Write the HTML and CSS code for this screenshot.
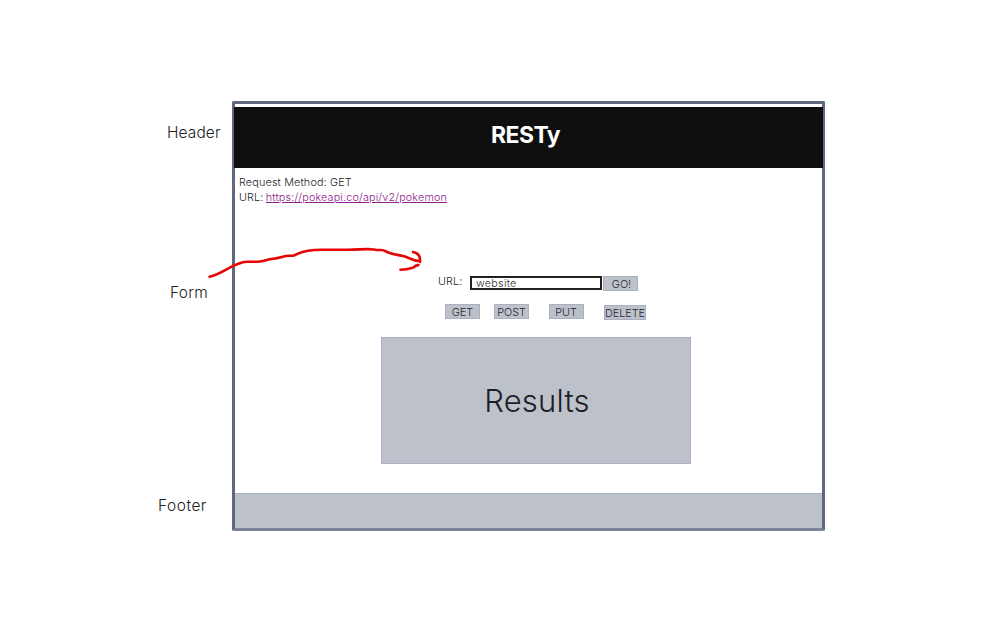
FILE: index.html
```html
<!DOCTYPE html>
<html lang="en">
<head>
<meta charset="utf-8">
<title>RESTy</title>
<link rel="stylesheet" href="styles.css">
</head>
<body>
<div class="board">
  <aside class="labels">
    <span class="label label-header">Header</span>
    <span class="label label-form">Form</span>
    <span class="label label-footer">Footer</span>
  </aside>
  <div class="frame">
    <header class="header"><h1>RESTy</h1></header>
    <main class="main">
      <div class="request">
        <div class="method">Request Method: GET</div>
        <div class="address">URL: <a href="#">https://pokeapi.co/api/v2/pokemon</a></div>
      </div>
      <form class="form">
        <div class="url-row">
          <label for="url">URL:</label>
          <input id="url" type="text" value="website">
          <button type="button" class="go">GO!</button>
        </div>
        <div class="methods">
          <button type="button" class="get">GET</button>
          <button type="button">POST</button>
          <button type="button" class="put">PUT</button>
          <button type="button" class="delete">DELETE</button>
        </div>
      </form>
      <section class="results"><span>Results</span></section>
    </main>
    <footer class="footer"></footer>
  </div>
  <svg class="arrow" viewBox="200 235 240 50" width="240" height="50" fill="none" stroke="#e60505" stroke-width="2.6" stroke-linecap="round" stroke-linejoin="round">
    <path d="M209.500 276.800C219 275 228 268 234 265.500C239 264 241 261.700 247 261.700H258C265 261.500 266 259.500 273 258.700C281 257.700 284 255.700 289 255.700C294 255.700 294 255.800 298 253.700C304 250.700 312 249.700 322 249.700H348C360 249.500 369 248.500 374 249.500C380 251 382 248.700 386 251.400C390 254 397 254.700 403 256C409 257.300 412 261 419.500 261"/>
    <path d="M413 252C419 253 420.500 257 420 262"/>
    <path d="M400.500 269.800C407 269.500 410 268.500 413.500 267.500C415 265.500 416 265.500 418.500 265"/>
  </svg>
</div>
</body>
</html>
```
FILE: styles.css
```css
* { box-sizing: border-box; }
body {
  margin: 0;
  background: #fff;
  color: #222;
  font-family: Inter, "Liberation Sans", sans-serif;
  font-weight: 300;
  overflow: hidden;
}
.board {
  position: relative;
  display: grid;
  grid-template-columns: 232px 593px;
  height: 633px;
  padding-top: 101px;
}
.labels {
  display: flex;
  flex-direction: column;
  align-items: flex-start;
  font-size: 15.5px;
  line-height: 20px;
}
.label-header { margin: 22px 0 0 167px; letter-spacing: 0.1px; }
.label-form { margin: 140px 0 0 170px; letter-spacing: 0.3px; }
.label-footer { margin: 193px 0 0 158px; letter-spacing: 0.5px; }
.frame {
  display: flex;
  flex-direction: column;
  height: 430px;
  padding-top: 3px;
  border: 3px solid #606882;
  border-bottom-color: #7b839b;
  border-radius: 2px;
}
.header {
  display: flex;
  justify-content: center;
  height: 61px;
  flex: none;
  margin: 0 -1px;
  background: #0f0f0f;
  color: #fff;
}
.header h1 {
  margin: 14px 6px 0 0;
  font-size: 23px;
  line-height: 28px;
  font-weight: 700;
  letter-spacing: -0.6px;
}
.main { flex: 1; }
.request {
  height: 108px;
  padding: 7px 0 0 4px;
  font-size: 10.8px;
  line-height: 15px;
  letter-spacing: 0.16px;
}
.address { word-spacing: -1px; }
.request a { color: #8d208d; }
.form { font-size: 10.8px; }
.url-row { display: flex; padding-left: 203px; height: 28px; }
.url-row label { width: 32px; line-height: 12px; letter-spacing: 0.1px; }
input {
  width: 132px;
  height: 14px;
  padding: 0 4px;
  border: 2px solid #202020;
  color: #333;
  font: 300 10.8px/10px Inter, "Liberation Sans", sans-serif;
  letter-spacing: 0.25px;
}
button {
  width: 35px;
  height: 15px;
  padding: 1px 0 0;
  border: 1px solid #a9b0c2;
  background: #bdc1ca;
  color: #252830;
  font: 300 10.8px/13px Inter, "Liberation Sans", sans-serif;
  white-space: nowrap;
}
.go { margin-left: 1px; padding-left: 2px; }
.methods { display: flex; padding-left: 210px; height: 33px; }
.methods button + button { margin-left: 14px; }
.methods .put { padding-right: 1px; }
.methods button + .put { margin-left: 20px; }
.methods .delete { width: 42px; margin-top: 1px; }
.methods .put + .delete { margin-left: 20px; }
.results {
  display: flex;
  align-items: center;
  justify-content: center;
  width: 310px;
  height: 127px;
  margin-left: 146px;
  padding: 0 0 1px 2px;
  border: 1px solid #a9b0c2;
  background: #bdc1ca;
  color: #1c1e27;
  font-size: 31px;
  letter-spacing: 0.2px;
}
.footer {
  flex: none;
  height: 35px;
  border-top: 1px solid #a9b0c2;
  background: #bdc1ca;
}
.arrow { position: absolute; left: 200px; top: 235px; }
```
